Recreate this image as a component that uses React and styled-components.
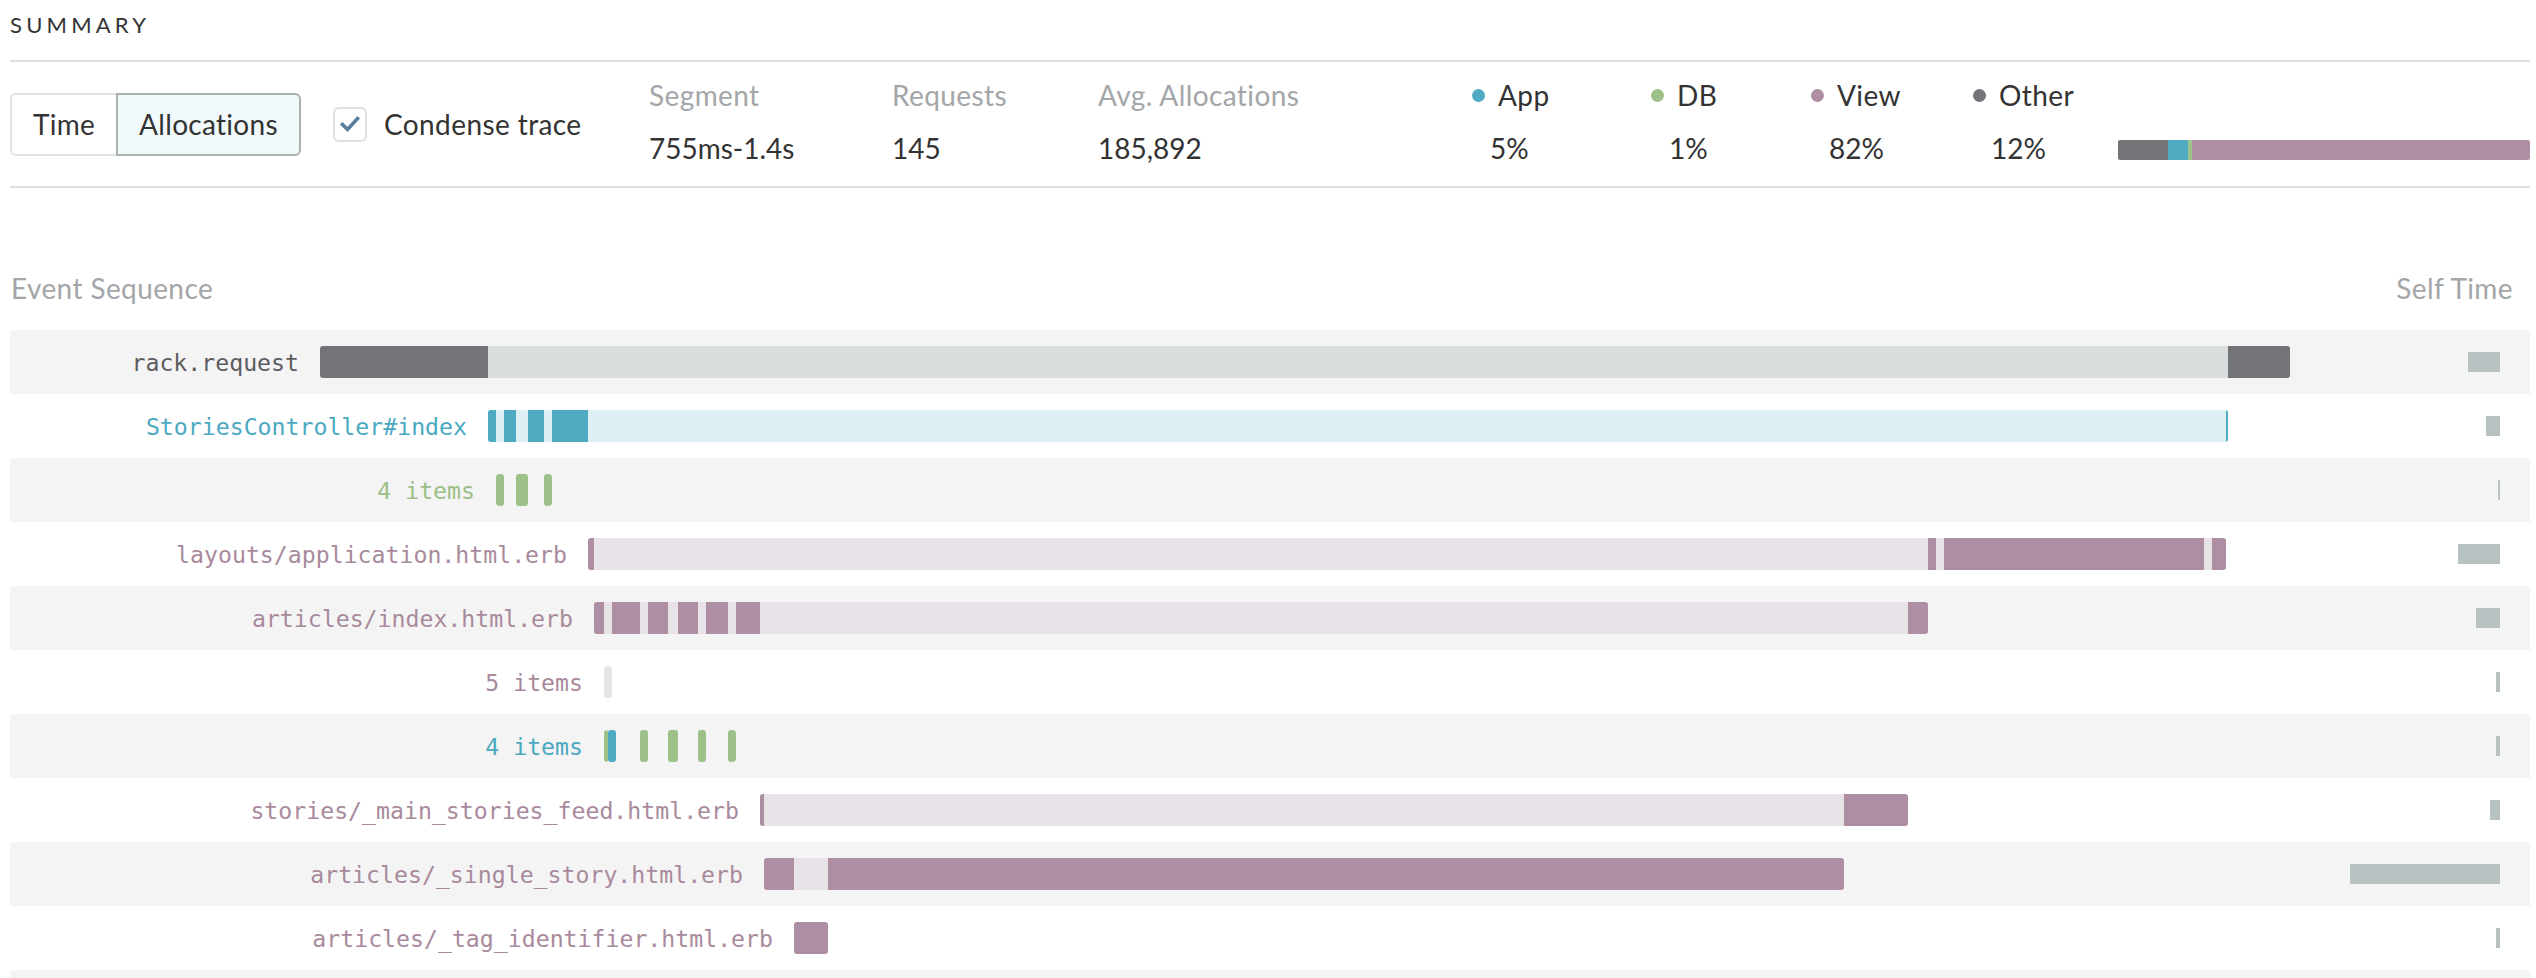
import React from "react";
import styled, { createGlobalStyle } from "styled-components";

const GlobalStyle = createGlobalStyle`
  html, body {
    margin: 0;
    background: #fff;
  }
  body {
    font-family: Lato, "Open Sans", sans-serif;
    color: #333;
  }
`;

// page x where rows begin; timeline positions below are page coordinates
const ROW_X = 10;

const colors = {
  other: "#737478",
  otherLight: "#d9dddd",
  app: "#4eabc2",
  appLight: "#dcf0f3",
  db: "#9dc189",
  view: "#ae8ea2",
  viewLight: "#e8e3e9",
};

const labelColors = {
  other: "#5c5d60",
  app: "#4aa9c1",
  db: "#9bbf86",
  view: "#a88a9c",
};

const events = [
  { label: "rack.request", tone: "other", start: 320, end: 2290, track: "otherLight", segs: [[320, 488], [2228, 2290]], self: 32 },
  { label: "StoriesController#index", tone: "app", start: 488, end: 2228, track: "appLight", segs: [[488, 496], [504, 516], [528, 544], [552, 588], [2226, 2228]], self: 14 },
  { label: "4 items", tone: "db", start: 496, end: 552, segs: [[496, 504], [516, 528], [544, 552]], loose: true, self: 2 },
  { label: "layouts/application.html.erb", tone: "view", start: 588, end: 2226, track: "viewLight", segs: [[588, 594], [1928, 1936], [1944, 2204], [2212, 2226]], self: 42 },
  { label: "articles/index.html.erb", tone: "view", start: 594, end: 1928, track: "viewLight", segs: [[594, 604], [612, 640], [648, 668], [678, 698], [706, 728], [736, 760], [1908, 1928]], self: 24 },
  { label: "5 items", tone: "view", start: 604, end: 612, track: "viewLight", segs: [], self: 4 },
  { label: "4 items", tone: "app", start: 604, end: 736, segs: [[604, 608, "db"], [608, 616, "app"], [640, 648, "db"], [668, 678, "db"], [698, 706, "db"], [728, 736, "db"]], loose: true, self: 4 },
  { label: "stories/_main_stories_feed.html.erb", tone: "view", start: 760, end: 1908, track: "viewLight", segs: [[760, 764], [1844, 1908]], self: 10 },
  { label: "articles/_single_story.html.erb", tone: "view", start: 764, end: 1844, track: "viewLight", segs: [[764, 794], [828, 1844]], self: 150 },
  { label: "articles/_tag_identifier.html.erb", tone: "view", start: 794, end: 828, track: "view", segs: [], self: 4 },
  { label: "", tone: "other", segs: [], self: 0 },
];

const legend = [
  { name: "App", color: colors.app, value: "5%", width: 179 },
  { name: "DB", color: colors.db, value: "1%", width: 160 },
  { name: "View", color: colors.view, value: "82%", width: 162 },
  { name: "Other", color: colors.other, value: "12%", width: 145 },
];

export default function App() {
  return (
    <Page>
      <GlobalStyle />
      <Title>SUMMARY</Title>
      <Divider />
      <Toolbar>
        <Controls>
          <SegGroup>
            <SegButton $first>Time</SegButton>
            <SegButton $active>Allocations</SegButton>
          </SegGroup>
          <CheckBox>
            <svg width="30" height="30" viewBox="0 0 30 30">
              <path d="M7.5 15.5 L12.5 20.5 L22.5 9.5" fill="none" stroke="#5b7d9c" strokeWidth="3.6" strokeLinecap="square" />
            </svg>
          </CheckBox>
          <CheckLabel>Condense trace</CheckLabel>
        </Controls>
        <Stat $width={243}>
          <StatLabel>Segment</StatLabel>
          <StatValue>755ms-1.4s</StatValue>
        </Stat>
        <Stat $width={206}>
          <StatLabel>Requests</StatLabel>
          <StatValue>145</StatValue>
        </Stat>
        <Stat $width={374}>
          <StatLabel>Avg. Allocations</StatLabel>
          <StatValue>185,892</StatValue>
        </Stat>
        {legend.map((l) => (
          <Stat key={l.name} $width={l.width}>
            <StatLabel $dark>
              <Dot $color={l.color} />
              {l.name}
            </StatLabel>
            <StatValue $indent>{l.value}</StatValue>
          </Stat>
        ))}
        <BarCell>
          <StackBar>
            <StackPart $color={colors.other} style={{ width: 50 }} />
            <StackPart $color={colors.app} style={{ width: 20 }} />
            <StackPart $color={colors.db} style={{ width: 4 }} />
            <StackPart $color={colors.view} $grow />
          </StackBar>
        </BarCell>
      </Toolbar>
      <Divider />
      <SequenceHeader>
        <span>Event Sequence</span>
        <span>Self Time</span>
      </SequenceHeader>
      <Rows>
        {events.map((ev, i) => (
          <Row key={i} $striped={i % 2 === 0}>
            <Timeline>
              {ev.label && (
                <>
                  <EventLabel $color={labelColors[ev.tone]} style={{ width: ev.start - ROW_X }}>
                    {ev.label}
                  </EventLabel>
                  <Span $track={ev.track ? colors[ev.track] : "transparent"} style={{ width: ev.end - ev.start }}>
                    {ev.segs.map(([a, b, tone], j) => (
                      <Seg
                        key={j}
                        $loose={ev.loose}
                        $color={colors[tone || ev.tone]}
                        style={{ left: a - ev.start, width: b - a }}
                      />
                    ))}
                  </Span>
                </>
              )}
            </Timeline>
            <SelfCell>{ev.self > 0 && <SelfBar style={{ width: ev.self }} />}</SelfCell>
          </Row>
        ))}
      </Rows>
    </Page>
  );
}

const Page = styled.div`
  padding: 0 6px 0 ${ROW_X}px;
  overflow: hidden;
  height: 978px;
  box-sizing: border-box;
`;

const Title = styled.div`
  font-size: 22px;
  letter-spacing: 4.2px;
  line-height: 33px;
  padding: 8px 0 19px;
  color: #333;
`;

const Divider = styled.div`
  height: 2px;
  background: #dcdfdf;
`;

const Toolbar = styled.div`
  display: flex;
  height: 124px;
`;

const Controls = styled.div`
  width: 639px;
  flex: none;
  display: flex;
  align-items: center;
`;

const SegGroup = styled.div`
  display: flex;
  height: 63px;
`;

const SegButton = styled.div`
  box-sizing: border-box;
  height: 100%;
  width: ${(p) => (p.$first ? 106 : 185)}px;
  display: flex;
  align-items: center;
  justify-content: center;
  font-size: 28px;
  letter-spacing: 0.3px;
  color: #333;
  border: 2px solid ${(p) => (p.$active ? "#a9b1b1" : "#e1e4e4")};
  border-right: ${(p) => (p.$first ? "none" : undefined)};
  background: ${(p) => (p.$active ? "#f1f9fb" : "#fff")};
  border-radius: ${(p) => (p.$first ? "6px 0 0 6px" : "0 6px 6px 0")};
`;

const CheckBox = styled.div`
  box-sizing: border-box;
  width: 34px;
  height: 35px;
  margin-left: 32px;
  border: 2px solid #dde1e1;
  border-radius: 6px;
  display: flex;
  align-items: center;
  justify-content: center;
`;

const CheckLabel = styled.div`
  margin-left: 17px;
  font-size: 28px;
  letter-spacing: 0.4px;
  color: #333;
`;

const Stat = styled.div`
  width: ${(p) => p.$width}px;
  flex: none;
  display: flex;
  flex-direction: column;
  gap: 21px;
  padding-top: 17px;
`;

const StatLabel = styled.div`
  display: flex;
  align-items: center;
  font-size: 28px;
  letter-spacing: 0.4px;
  line-height: 32px;
  color: ${(p) => (p.$dark ? "#333" : "#a3a6a9")};
  white-space: nowrap;
`;

const StatValue = styled.div`
  font-size: 28px;
  line-height: 32px;
  color: #333;
  padding-left: ${(p) => (p.$indent ? 18 : 0)}px;
`;

const Dot = styled.span`
  width: 13px;
  height: 13px;
  border-radius: 50%;
  background: ${(p) => p.$color};
  margin-right: 13px;
  flex: none;
`;

const BarCell = styled.div`
  flex: 1;
  padding-top: 78px;
`;

const StackBar = styled.div`
  display: flex;
  height: 20px;
  border-radius: 2px;
  overflow: hidden;
`;

const StackPart = styled.div`
  background: ${(p) => p.$color};
  flex: ${(p) => (p.$grow ? 1 : "none")};
`;

const SequenceHeader = styled.div`
  display: flex;
  justify-content: space-between;
  padding: 84px 17px 26px 1px;
  font-size: 28px;
  letter-spacing: 0.4px;
  line-height: 32px;
  color: #a3a6a9;
`;

const Rows = styled.div`
  display: flex;
  flex-direction: column;
`;

const Row = styled.div`
  display: flex;
  align-items: center;
  height: 64px;
  flex: none;
  background: ${(p) => (p.$striped ? "#f4f4f4" : "#fff")};
`;

const Timeline = styled.div`
  flex: 1;
  display: flex;
  align-items: center;
`;

const EventLabel = styled.div`
  box-sizing: border-box;
  flex: none;
  padding-right: 21px;
  text-align: right;
  white-space: nowrap;
  font-family: "DejaVu Sans Mono", "Liberation Mono", monospace;
  font-size: 23.2px;
  color: ${(p) => p.$color};
`;

const Span = styled.div`
  position: relative;
  flex: none;
  height: 32px;
  border-radius: 3px;
  overflow: hidden;
  background: ${(p) => p.$track};
`;

const Seg = styled.div`
  position: absolute;
  top: 0;
  bottom: 0;
  background: ${(p) => p.$color};
  border-radius: ${(p) => (p.$loose ? "3px" : "0")};
`;

const SelfCell = styled.div`
  width: 200px;
  flex: none;
  display: flex;
  justify-content: flex-end;
  padding-right: 30px;
  box-sizing: border-box;
`;

const SelfBar = styled.div`
  height: 20px;
  background: #b9c2c3;
`;
